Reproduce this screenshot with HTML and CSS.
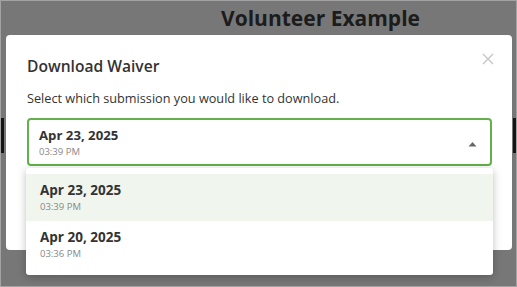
FILE: index.html
```html
<!DOCTYPE html>
<html>
<head>
<meta charset="utf-8">
<link rel="stylesheet" href="styles.css">
</head>
<body>
<div class="screen">
  <div class="page">
    <h1 class="page-title">Volunteer Example</h1>
  </div>
  <span class="edge edge-left"></span>
  <span class="edge edge-right"></span>
  <div class="modal">
    <div class="modal-head">
      <h2 class="modal-title">Download Waiver</h2>
      <svg class="close" width="12" height="12" viewBox="0 0 12 12"><path d="M1 1L11 11M11 1L1 11" stroke="#c4c4c4" stroke-width="1.3" fill="none"/></svg>
    </div>
    <p class="modal-text">Select which submission you would like to download.</p>
    <div class="select">
      <div class="option-text">
        <div class="date date-sm">Apr 23, 2025</div>
        <div class="time">03:39 PM</div>
      </div>
      <svg class="caret" width="9" height="6" viewBox="0 0 9 6"><path d="M0.5 5.5L4.5 1L8.5 5.5Z" fill="#666"/></svg>
    </div>
  </div>
  <div class="menu">
    <div class="menu-item active">
      <div class="date">Apr 23, 2025</div>
      <div class="time">03:39 PM</div>
    </div>
    <div class="menu-item">
      <div class="date">Apr 20, 2025</div>
      <div class="time">03:36 PM</div>
    </div>
  </div>
</div>
</body>
</html>
```

FILE: styles.css
```css
* { box-sizing: border-box; }
html, body { margin: 0; padding: 0; }
body { font-family: "Open Sans", "Liberation Sans", sans-serif; color: #333; }

.screen {
  position: relative;
  width: 517px;
  height: 287px;
  overflow: hidden;
  background: #777777;
  border: 1px solid #a3a3a3;
}

.page { display: flex; justify-content: center; padding-left: 124px; }
.page-title {
  margin: 3px 0 0;
  font-size: 21px;
  font-weight: 700;
  color: #1c1c1c;
}

.edge { position: absolute; width: 3px; height: 35px; top: 117px; background: #151515; }
.edge-left { left: 0; }
.edge-right { right: 0; }

.modal {
  position: absolute;
  left: 5px;
  top: 34px;
  width: 506px;
  height: 215px;
  background: #fff;
  border-radius: 4px;
  padding: 0 20px 0 21px;
}
.modal-head { display: flex; justify-content: space-between; align-items: flex-start; padding-top: 20px; }
.modal-title { margin: 0; font-size: 15.6px; font-weight: 600; line-height: 22px; color: #333; }
.close { margin-top: -2px; margin-right: -2px; }
.modal-text { margin: 12px 0 0; font-size: 12.7px; line-height: 18px; color: #333; }

.select {
  margin-top: 11px;
  height: 48px;
  border: 2px solid #62b14a;
  border-radius: 4px;
  display: flex;
  align-items: center;
  justify-content: space-between;
  padding: 1px 13px 0 10px;
}
.caret { margin-top: 2px; }

.date { font-size: 13.5px; font-weight: 700; line-height: 17px; color: #333; }
.date-sm { font-size: 13.2px; }
.time { font-size: 9.5px; line-height: 13px; color: #888; margin-top: 1px; }

.menu {
  position: absolute;
  left: 25px;
  top: 167px;
  width: 467px;
  background: #fff;
  border-radius: 3px;
  padding: 6px 0 7px;
  box-shadow: 0 2px 8px rgba(0,0,0,0.25);
}
.menu-item { height: 47px; padding: 7px 14px; display: flex; flex-direction: column; justify-content: center; }
.menu-item.active { background: #f0f5ee; }
```
